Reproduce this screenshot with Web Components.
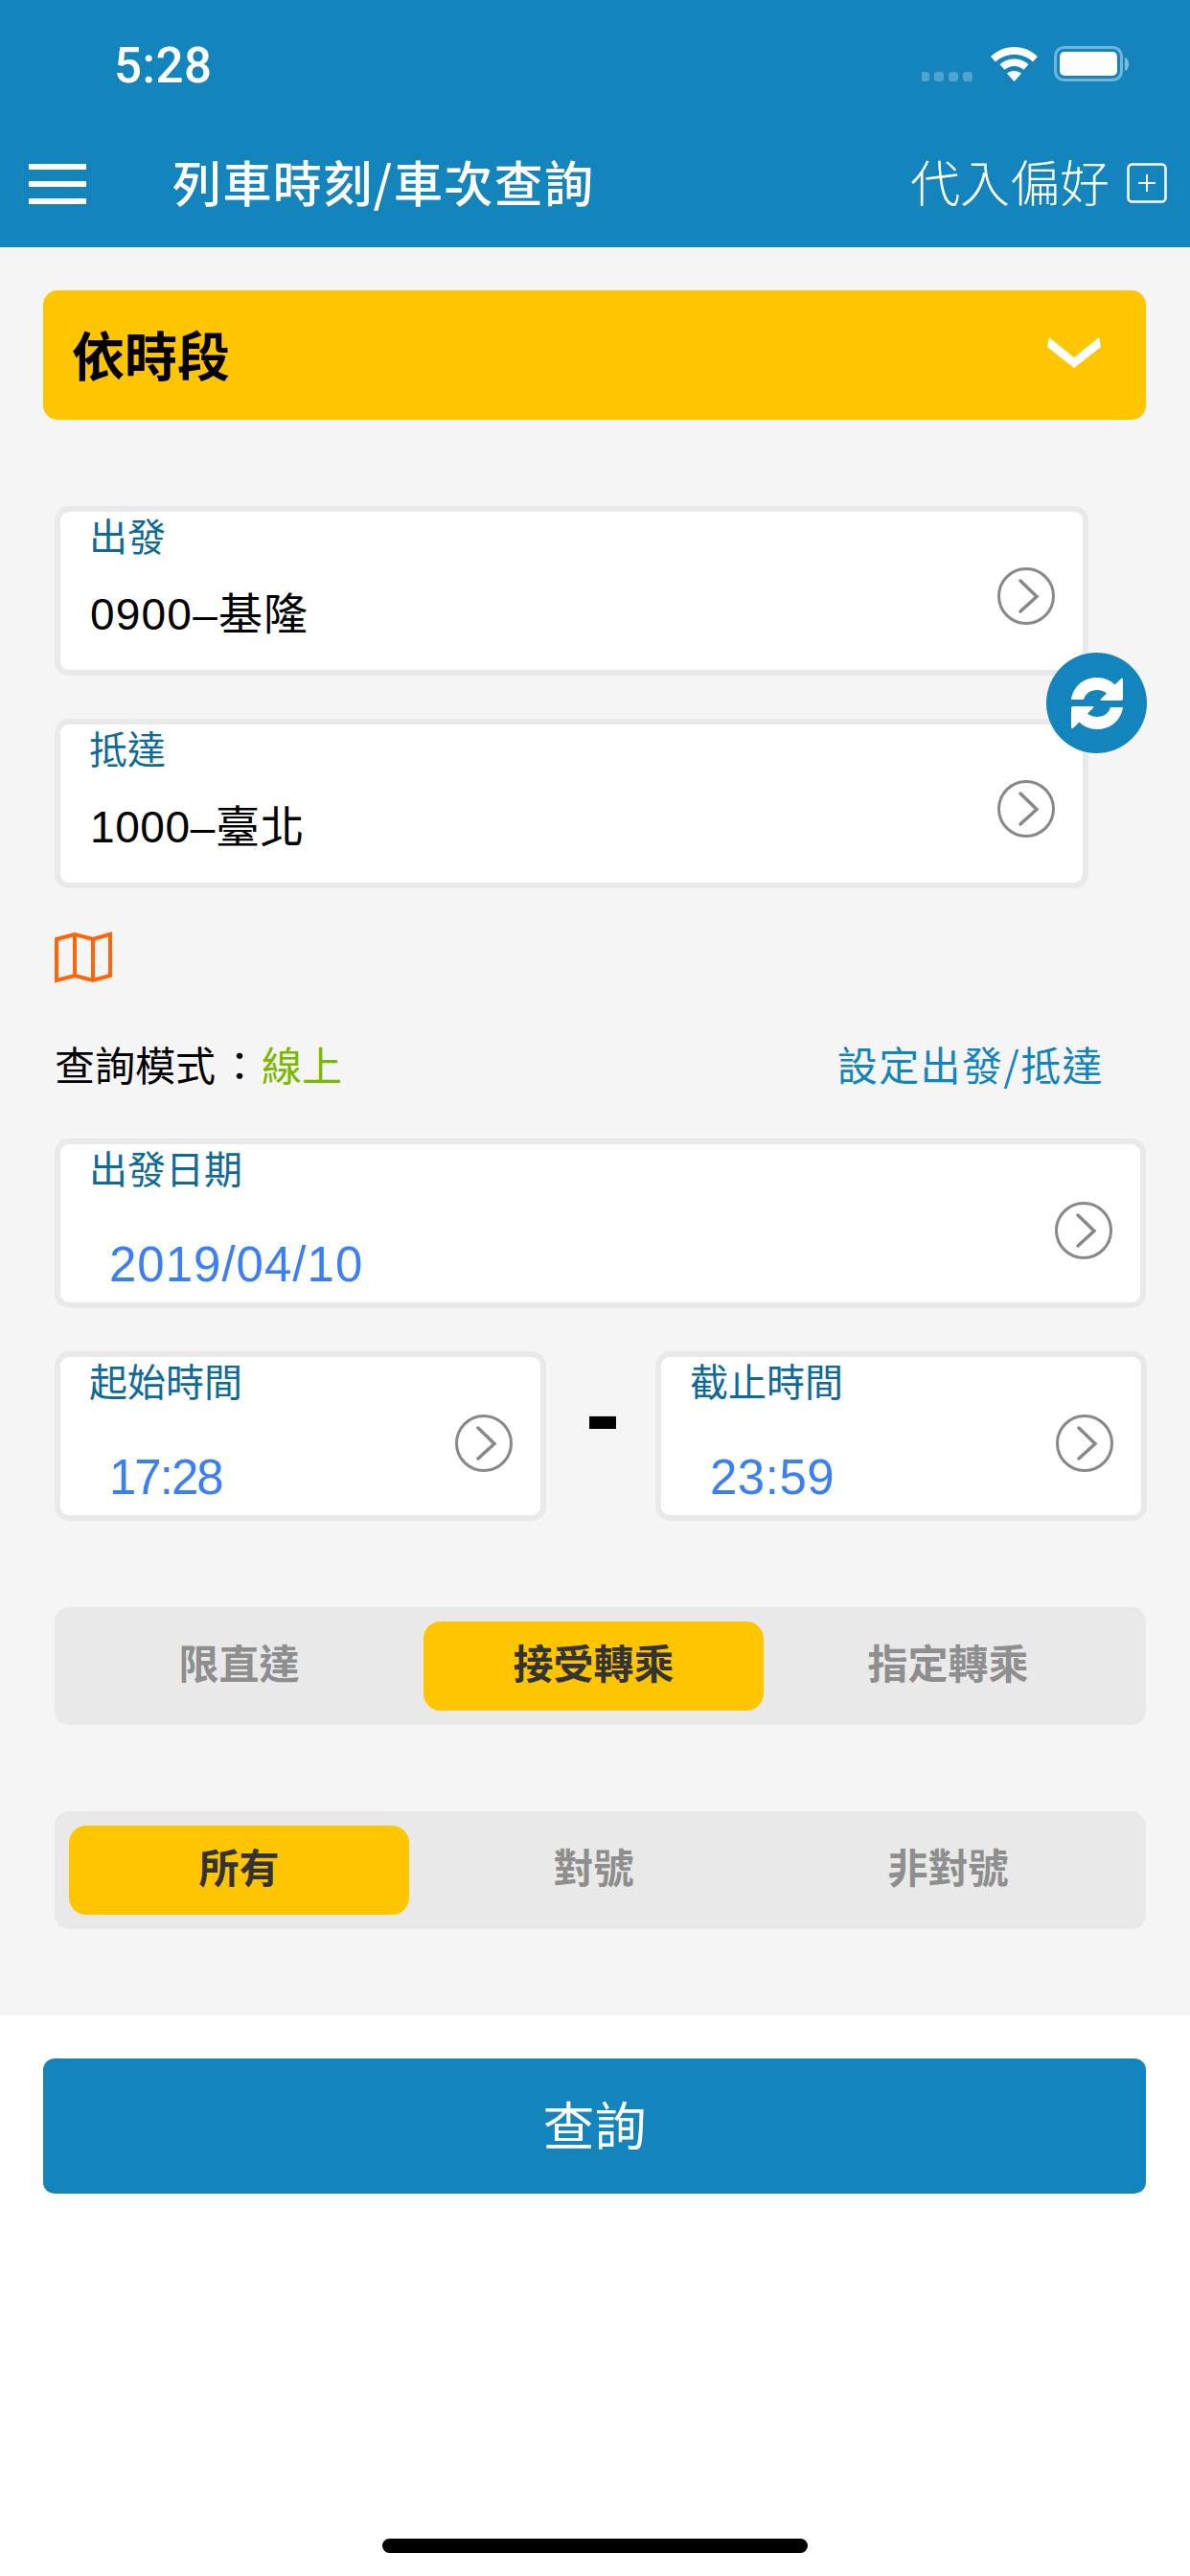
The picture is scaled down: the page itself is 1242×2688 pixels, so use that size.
<!DOCTYPE html>
<html lang="zh-Hant"><head><meta charset="utf-8"><title>列車時刻</title>
<style>
html,body{margin:0;padding:0;background:#fff}
body{width:1242px;height:2688px;overflow:hidden;font-family:"Liberation Sans","Noto Sans CJK TC",sans-serif;display:flex;flex-direction:column}
</style></head><body>
<train-header></train-header>
<query-form>
  <mode-select>依時段</mode-select>
  <station-pair>
    <field-card label="出發" value="0900–基隆" spacing="1.2px"></field-card>
    <field-card label="抵達" value="1000–臺北" spacing=".6px"></field-card>
  </station-pair>
  <query-mode></query-mode>
  <field-card kind="date" label="出發日期" value="2019/04/10" spacing="1px" style="margin:48px 0 0 12px"></field-card>
  <time-range>
    <field-card kind="date" label="起始時間" value="17:28" spacing="-2px"></field-card>
    <field-card kind="date" label="截止時間" value="23:59" spacing=".5px"></field-card>
  </time-range>
  <seg-control active="1" items="限直達,接受轉乘,指定轉乘" style="margin-top:90px"></seg-control>
  <seg-control active="0" items="所有,對號,非對號" style="margin-top:90px"></seg-control>
</query-form>
<query-footer>查詢</query-footer>
<script>
const FONT='"Liberation Sans","Noto Sans CJK TC",sans-serif';
const CJK='"Noto Sans CJK TC",sans-serif';
class Base extends HTMLElement{
  render(html){ (this.shadowRoot||this.attachShadow({mode:'open'})).innerHTML=html; }
}
customElements.define('train-header',class extends Base{connectedCallback(){this.render(`
<style>
:host{display:block;height:258px;background:#1485bc;color:#fff;flex:none}
.status{height:135px;position:relative;display:flex;align-items:flex-start}
.time{font:500 51px/46px Roboto,sans-serif;margin:46px 0 0 119px;letter-spacing:.5px}
.icons{margin-left:auto;margin-right:70px;padding-top:48px;display:flex;align-items:flex-start}
.nav{display:flex;align-items:center;height:112px;padding:0 24px 0 30px;margin-top:0}
.burger{width:60px;height:42px;display:flex;flex-direction:column;justify-content:space-between;margin-top:2px}
.burger i{display:block;height:6px;background:#fff}
.title{font:500 51px/60px ${CJK};margin-left:90px;letter-spacing:1.4px;margin-top:-4px}
.pref{margin-left:auto;font:300 52px/60px ${CJK};margin-top:-4px}
svg{display:block}
.plus{margin-left:18px}
</style>
<div class="status"><div class="time">5:28</div>
<div class="icons">
<svg width="146" height="40" viewBox="0 0 146 40">
<g fill="#fff" opacity=".25"><rect x="-2" y="27" width="10" height="10" rx="3"/><rect x="13" y="27" width="10" height="10" rx="3"/><rect x="28" y="27" width="10" height="10" rx="3"/><rect x="43" y="27" width="10" height="10" rx="3"/></g>
<g fill="#fff" transform="translate(72,1)">
<path d="M24.5 0C15 0 7 3.6 0 10l5 5.500C10.500 10.500 17 8 24.500 8S38.500 10.500 44 15.500l5-5.500C42 3.600 34 0 24.500 0Z"/>
<path d="M24.500 12.500c-6 0-11 2-15 5.800l5 5.400c2.800-2.500 6.200-3.800 10-3.800s7.200 1.300 10 3.800l5-5.400c-4-3.800-9-5.800-15-5.800Z"/>
<path d="M24.500 25c-3 0-5.500 1-7.500 2.800L24.500 36 32 27.800C30 26 27.500 25 24.500 25Z"/></g>
</svg>
<svg width="80" height="38" viewBox="0 0 80 38" style="margin-left:-8px;margin-right:-8px">
<rect x="1.500" y="1.500" width="69" height="34" rx="9" fill="none" stroke="#fff" stroke-opacity=".4" stroke-width="3"/>
<rect x="6" y="6" width="60" height="25" rx="5" fill="#fff"/>
<path d="M74 12c3 1 4 4 4 7s-1 6-4 7Z" fill="#fff" fill-opacity=".45"/>
</svg></div></div>
<div class="nav"><div class="burger"><i></i><i></i><i></i></div><div class="title">列車時刻/車次查詢</div>
<div class="pref">代入偏好</div>
<svg class="plus" width="42" height="42" viewBox="0 0 42 42" fill="none" stroke="#fff"><rect x="1.500" y="1.500" width="39" height="39" rx="4" stroke-width="2.500"/><path d="M21 12v18M12 21h18" stroke-width="2"/></svg>
</div>`);}});

customElements.define('query-form',class extends Base{connectedCallback(){this.render(`
<style>:host{display:flex;flex-direction:column;background:#f5f5f5;height:1845px;padding:45px 46px 0 45px;box-sizing:border-box;flex:none}</style><slot></slot>`);}});

customElements.define('mode-select',class extends Base{connectedCallback(){this.render(`
<style>:host{display:flex;align-items:center;height:135px;background:#ffc600;border-radius:15px;padding:0 47px 6px 30px;box-sizing:border-box;font:700 55px/54px ${CJK};color:#000;flex:none}
svg{margin-left:auto}</style><slot></slot>
<svg width="56" height="32" viewBox="0 0 56 32"><path d="M2 0 28 21 54 0 56 10 28 32 0 10Z" fill="#fff"/></svg>`);}});

customElements.define('station-pair',class extends Base{connectedCallback(){this.render(`
<style>:host{display:block;position:relative;margin:90px 60px 0 12px;flex:none}
::slotted(field-card:last-of-type){margin-top:45px}
.swap{position:absolute;left:1035px;top:153px;width:105px;height:105px;border-radius:50%;background:#1485bc;display:flex;align-items:center;justify-content:center}
</style><slot></slot>
<div class="swap"><svg width="54" height="54" viewBox="0 0 54 54" fill="#fff">
<path d="M0 23h13c1.500-6 7-10 14-10 4 0 7.500 1.500 10 3.500l-6 5.700c-.8 .8-.3 1.800 .7 1.800H52c1 0 2-.8 2-2V2c0-1-1.200-1.500-2-.8l-6.500 6.300C41 2.800 34.500 0 27 0 12.500 0 2 9.500 0 23Z"/>
<path d="M54 31H41c-1.500 6-7 10-14 10-4 0-7.500-1.500-10-3.500l6-5.700c.8-.8 .3-1.800-.7-1.800H2c-1 0-2 .8-2 2v20c0 1 1.200 1.500 2 .8l6.500-6.300C13 51.200 19.500 54 27 54 41.500 54 52 44.500 54 31Z"/></svg></div>`);}});

customElements.define('field-card',class extends Base{connectedCallback(){
const date=this.getAttribute('kind')==='date';
const val=this.getAttribute('value');
this.render(`
<style>:host{display:flex;box-sizing:border-box;height:177px;background:#fff;border:6px solid #e9e9e9;border-radius:15px;padding:0 29px 0 30px;align-items:center;flex:none}
.col{flex:1;min-width:0;align-self:flex-start}
.l{font:400 40px/54px ${CJK};color:#0e6a96;display:block;margin-top:-3px}
.v{display:block;font:400 ${date?'51px':'46px'}/60px ${FONT};color:${date?'#3b7ff5':'#000'};margin-top:${date?'45px':'26px'};padding-left:${date?'21px':'1px'};letter-spacing:${this.getAttribute('spacing')}}
svg{display:block;margin-top:${date?'14px':'11px'}}
</style><div class="col"><span class="l">${this.getAttribute('label')}</span><span class="v">${val}</span></div>
<svg width="60" height="60" viewBox="0 0 60 60" fill="none" stroke="#888"><circle cx="30" cy="30" r="28.500" stroke-width="3"/><path d="M24 14 41 30.500 24 46" stroke-width="3.500" stroke-linecap="round" stroke-linejoin="miter"/></svg>`);}});

customElements.define('query-mode',class extends Base{connectedCallback(){this.render(`
<style>:host{display:block;margin:45px 0 0 12px;flex:none;font:400 42px/60px ${CJK};color:#000}
svg{display:block}
.row{display:flex;margin-top:54px;height:60px;margin-right:44px}
.c{margin:0 2px 0 4px}
.on{color:#7ab800}.link{margin-left:auto;color:#1485bc;letter-spacing:1.4px}</style>
<svg width="60" height="54" viewBox="0 0 60 54" fill="none" stroke="#ff6508" stroke-width="4"><path d="M2 8 21 3 40 8 58 3V46L40 51 21 46 2 51ZM21 3V46M40 8V51"/></svg>
<div class="row"><div>查詢模式<span class="c">：</span><span class="on">線上</span></div><div class="link">設定出發/抵達</div></div>`);}});

customElements.define('time-range',class extends Base{connectedCallback(){this.render(`
<style>:host{display:flex;margin:45px 0 0 12px;flex:none;align-items:flex-start}
::slotted(field-card){width:513px}
.d{width:114px;height:177px;display:flex;justify-content:center;flex:none;overflow:hidden;padding-left:4px;box-sizing:border-box}
.d span{font:700 110px/110px "Liberation Sans",sans-serif;color:#000;margin-top:10px}
</style><slot name="a"></slot><div class="d"><span>-</span></div><slot name="b"></slot>`);
const c=this.querySelectorAll('field-card');c[0].slot='a';c[1].slot='b';}});

customElements.define('seg-control',class extends Base{connectedCallback(){
const a=+this.getAttribute('active');
const items=this.getAttribute('items').split(',').map((t,i)=>`<div class="b${i===a?' on':''}">${t}</div>`).join('');
this.render(`
<style>:host{display:grid;grid-template-columns:repeat(3,355px);column-gap:15px;height:123px;box-sizing:border-box;padding:15px 29px 15px 15px;margin-left:12px;background:#e9e9e9;border-radius:15px;flex:none}
.b{display:flex;align-items:center;justify-content:center;border-radius:18px;font:700 42px/60px ${CJK};color:#8e8e8e;padding-bottom:10px;box-sizing:border-box}
.on{background:#ffc600;color:#333}</style>${items}`);}});

customElements.define('query-footer',class extends Base{connectedCallback(){this.render(`
<style>:host{display:block;flex:none;position:relative;height:585px;background:#fff}
.b{margin:45px 46px 0 45px;height:141px;background:#1485bc;border-radius:12px;color:#fff;font:400 54px/60px ${CJK};display:flex;align-items:center;justify-content:center;padding-bottom:5px;box-sizing:border-box}
.h{position:absolute;left:399px;bottom:24px;width:444px;height:15px;border-radius:8px;background:#000}</style>
<div class="b"><slot></slot></div><div class="h"></div>`);}});
</script>
</body></html>
